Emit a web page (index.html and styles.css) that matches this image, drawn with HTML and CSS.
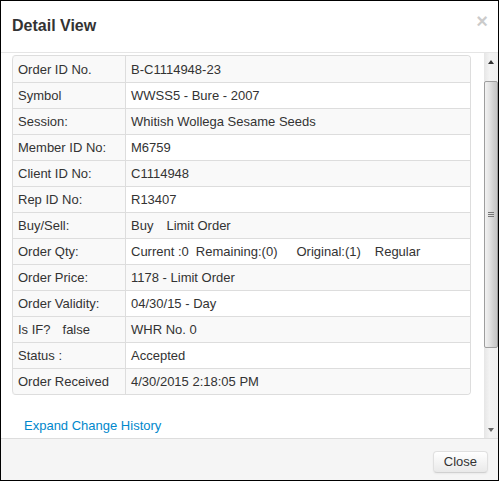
FILE: index.html
```html
<!DOCTYPE html>
<html>
<head>
<meta charset="utf-8">
<link rel="stylesheet" href="styles.css">
</head>
<body>
<div class="modal">
  <div class="modal-header">
    <h3 class="title">Detail View</h3>
    <span class="close">×</span>
  </div>
  <div class="modal-body">
    <div class="body-content">
      <table class="details">
        <tr class="odd"><td class="lbl">Order ID No.</td><td>B-C1114948-23</td></tr>
        <tr><td class="lbl">Symbol</td><td>WWSS5 - Bure - 2007</td></tr>
        <tr class="odd"><td class="lbl">Session:</td><td>Whitish Wollega Sesame Seeds</td></tr>
        <tr><td class="lbl">Member ID No:</td><td>M6759</td></tr>
        <tr class="odd"><td class="lbl">Client ID No:</td><td>C1114948</td></tr>
        <tr><td class="lbl">Rep ID No:</td><td>R13407</td></tr>
        <tr class="odd"><td class="lbl">Buy/Sell:</td><td><span class="g13">Buy</span>Limit Order</td></tr>
        <tr><td class="lbl">Order Qty:</td><td><span class="g7">Current :0</span><span class="g19">Remaining:(0)</span><span class="g14">Original:(1)</span>Regular</td></tr>
        <tr class="odd"><td class="lbl">Order Price:</td><td>1178 - Limit Order</td></tr>
        <tr><td class="lbl">Order Validity:</td><td>04/30/15 - Day</td></tr>
        <tr class="odd"><td class="lbl"><span class="g12">Is IF?</span>false</td><td>WHR No. 0</td></tr>
        <tr><td class="lbl">Status :</td><td>Accepted</td></tr>
        <tr class="odd"><td class="lbl">Order Received</td><td>4/30/2015 2:18:05 PM</td></tr>
      </table>
      <a class="history" href="#">Expand Change History</a>
    </div>
    <div class="scrollbar">
      <div class="sb-btn"><span class="arrow-up"></span></div>
      <div class="sb-track">
        <div class="sb-thumb"><span class="grip"></span></div>
      </div>
      <div class="sb-btn"><span class="arrow-down"></span></div>
    </div>
  </div>
  <div class="modal-footer">
    <button class="btn">Close</button>
  </div>
</div>
</body>
</html>
```
FILE: styles.css
```css
html, body {
  margin: 0;
  padding: 0;
  background: #fff;
}
.modal {
  width: 499px;
  height: 481px;
  box-sizing: border-box;
  border: 1px solid #000;
  display: flex;
  flex-direction: column;
  font-family: "Liberation Sans", Arial, sans-serif;
  font-size: 13px;
  color: #333;
  background: #fff;
}
.modal-header {
  height: 52px;
  box-sizing: border-box;
  border-bottom: 1px solid #e5e5e5;
  padding: 15px 10px 0 11px;
  display: flex;
  justify-content: space-between;
  align-items: flex-start;
}
.title {
  margin: 0;
  font-size: 16px;
  line-height: 20px;
  font-weight: bold;
  color: #333;
}
.close {
  font-size: 20px;
  line-height: 20px;
  font-weight: bold;
  color: #000;
  opacity: 0.2;
  margin-top: -5px;
}
.modal-body {
  flex: 1;
  display: flex;
  min-height: 0;
}
.body-content {
  flex: 1;
  padding: 2px 0 0 11px;
  display: flex;
  flex-direction: column;
  align-items: flex-start;
}
.details {
  width: 459px;
  border-collapse: separate;
  border-spacing: 0;
  border: 1px solid #ddd;
  border-left: 0;
  border-radius: 4px;
}
.details td {
  border-left: 1px solid #ddd;
  border-top: 1px solid #ddd;
  padding: 4px 5px;
  line-height: 17px;
  height: 17px;
  white-space: nowrap;
  vertical-align: middle;
}
.details tr:first-child td {
  border-top: 0;
  padding-top: 4px;
  height: 18px;
}
.details tr:first-child td:first-child { border-top-left-radius: 4px; }
.details tr:first-child td:last-child { border-top-right-radius: 4px; }
.details tr:last-child td:first-child { border-bottom-left-radius: 4px; }
.details tr:last-child td:last-child { border-bottom-right-radius: 4px; }
.details td.lbl {
  width: 102px;
  background: #f9f9f9;
}
.details tr.odd td {
  background: #f9f9f9;
}
.g7 { margin-right: 7px; }
.g12 { margin-right: 12px; }
.g13 { margin-right: 13px; }
.g14 { margin-right: 14px; }
.g19 { margin-right: 19px; }
.history {
  margin: 22px 0 0 12px;
  line-height: 18px;
  color: #0088cc;
  text-decoration: none;
}
.scrollbar {
  width: 14px;
  display: flex;
  flex-direction: column;
  background: linear-gradient(to right, #e6e6e6, #f3f3f3 40%, #efefef);
}
.sb-btn {
  height: 17px;
  display: flex;
  align-items: center;
  justify-content: center;
}
.arrow-up {
  width: 0;
  height: 0;
  border-left: 3px solid transparent;
  border-right: 3px solid transparent;
  border-bottom: 4px solid #333;
  margin-top: 1px;
}
.arrow-down {
  width: 0;
  height: 0;
  border-left: 3px solid transparent;
  border-right: 3px solid transparent;
  border-top: 4px solid #666;
}
.sb-track {
  flex: 1;
  padding-top: 11px;
}
.sb-thumb {
  height: 265px;
  box-sizing: content-box;
  border: 1px solid #9e9e9e;
  border-radius: 2px;
  background: linear-gradient(to right, #f2f2f2, #e2e2e2 40%, #cfcfcf 75%, #c6c6c6);
  display: flex;
  align-items: center;
  justify-content: center;
}
.grip {
  width: 6px;
  height: 5px;
  background: repeating-linear-gradient(to bottom, #777 0, #777 1px, transparent 1px, transparent 2px);
}
.modal-footer {
  height: 42px;
  box-sizing: border-box;
  border-top: 1px solid #ddd;
  background: #f5f5f5;
  padding: 12px 10px 0 0;
  display: flex;
  justify-content: flex-end;
  align-items: flex-start;
}
.btn {
  font-family: "Liberation Sans", Arial, sans-serif;
  font-size: 13px;
  line-height: 16px;
  color: #333;
  padding: 2px 10px;
  border: 1px solid #e0e0e0;
  border-bottom-color: #d0d0d0;
  border-radius: 4px;
  background: linear-gradient(to bottom, #ffffff, #e9e9e9);
  box-shadow: 0 1px 2px rgba(0,0,0,0.05);
}
```
